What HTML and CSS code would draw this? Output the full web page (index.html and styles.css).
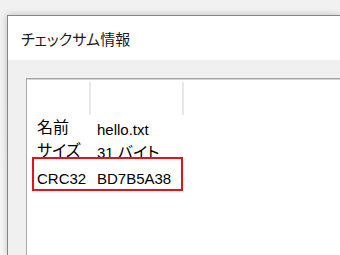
FILE: index.html
```html
<!DOCTYPE html>
<html lang="ja">
<head>
<meta charset="utf-8">
<title>チェックサム情報</title>
<link rel="stylesheet" href="styles.css">
</head>
<body>
<div class="window">
  <div class="titlebar"><span class="title">チェックサム情報</span></div>
  <div class="client">
    <div class="listview">
      <div class="header">
        <div class="hcell c1"></div>
        <div class="hcell c2"></div>
        <div class="hcell rest"></div>
      </div>
      <div class="rows">
        <div class="row"><span class="k ja">名前</span><span class="v">hello.txt</span></div>
        <div class="row"><span class="k ja">サイズ</span><span class="v">31 <span class="ja">バイト</span></span></div>
        <div class="row hl"><span class="k">CRC32</span><span class="v">BD7B5A38</span></div>
      </div>
    </div>
  </div>
</div>
</body>
</html>
```

FILE: styles.css
```css
html, body {
  margin: 0;
  padding: 0;
  width: 340px;
  height: 255px;
  overflow: hidden;
}
body {
  background: linear-gradient(#f1f1f1, #f7f7f7);
  font-family: "Liberation Sans", "Noto Sans CJK JP", sans-serif;
  color: #000;
}
.window {
  margin: 15px 0 0 7px;
  width: 332px;
  height: 239px;
  border-top: 1px solid #858585;
  border-left: 1px solid #858585;
  background: #fff;
  box-shadow: 0 0 7px rgba(0, 0, 0, 0.22);
  display: flex;
  flex-direction: column;
}
.titlebar {
  height: 44px;
  flex: none;
  display: flex;
  align-items: center;
  padding-left: 13px;
  background: #fff;
}
.title {
  font-family: "Noto Sans CJK JP", sans-serif;
  font-size: 15px;
  font-feature-settings: "palt";
  color: #1a1a1a;
}
.client {
  flex: 1;
  background: #f0f0f0;
  padding: 18px 0 0 18px;
}
.listview {
  height: 100%;
  background: #fff;
  border-top: 1px solid #a3a3a3;
  border-left: 1px solid #a8a8a8;
  box-shadow: inset 0 1px 0 #d4d4d4;
}
.header {
  display: flex;
  height: 33px;
  padding-top: 3px;
}
.hcell {
  height: 33px;
}
.c1 {
  width: 62px;
  border-right: 2px solid #e8e8e8;
}
.c2 {
  width: 91px;
  border-right: 2px solid #e8e8e8;
}
.rows {
  padding: 3px 0 0 5px;
  font-size: 15px;
}
.row {
  display: grid;
  grid-template-columns: 60px auto;
  width: 141px;
  height: 23px;
  line-height: 23px;
  padding: 0 5px;
  white-space: nowrap;
}
.ja {
  font-family: "Noto Sans CJK JP", sans-serif;
  font-size: 16px;
  font-feature-settings: "palt";
  line-height: 1;
}
.row.hl {
  position: relative;
  margin-top: 3px;
}
.row.hl::after {
  content: "";
  position: absolute;
  left: 0;
  top: -10px;
  width: 147px;
  height: 30px;
  border: 2px solid #e3121b;
}
```
